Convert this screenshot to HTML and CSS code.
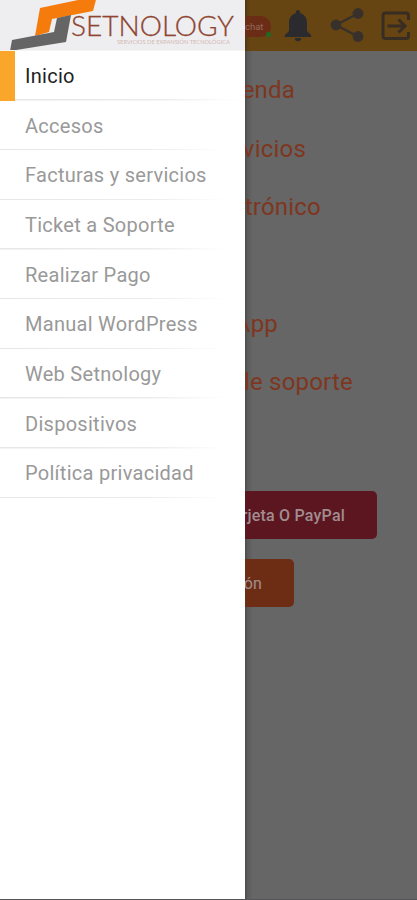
FILE: index.html
```html
<!DOCTYPE html>
<html lang="es">
<head>
    <meta charset="utf-8">
    <title>Setnology</title>
    <link rel="stylesheet" href="styles.css">
</head>
<body>
    <div class="app">
        <!-- Side menu -->
        <aside class="drawer">
            <div class="brand">
                <svg width="245" height="50" viewBox="0 0 245 50">
                    <path d="M40 8 L97 -4 L93 11 L52 19 L49 32 L35 36 Z" fill="#f57c0c"/>
                    <path d="M57 18 L71 15 L66 42 L10 51 L12 40 L54 32 Z" fill="#656565"/>
                    <text class="brand-name" x="71" y="36" textLength="163" lengthAdjust="spacingAndGlyphs">SETNOLOGY</text>
                    <text class="brand-tag" x="117" y="43.5" textLength="113" lengthAdjust="spacingAndGlyphs">SERVICIOS DE EXPANSIÓN TECNOLÓGICA</text>
                </svg>
            </div>
            <ul class="menu">
                <li class="menu-item active"><span>Inicio</span></li>
                <li class="menu-item"><span>Accesos</span></li>
                <li class="menu-item"><span>Facturas y servicios</span></li>
                <li class="menu-item"><span>Ticket a Soporte</span></li>
                <li class="menu-item"><span>Realizar Pago</span></li>
                <li class="menu-item"><span>Manual WordPress</span></li>
                <li class="menu-item"><span>Web Setnology</span></li>
                <li class="menu-item"><span>Dispositivos</span></li>
                <li class="menu-item"><span>Política privacidad</span></li>
            </ul>
        </aside>

        <!-- Dimmed page behind the menu -->
        <main class="page">
            <header class="topbar">
                <div class="chat">chat<span class="online"></span></div>
                <svg class="icon-bell" width="28" height="34" viewBox="0 0 28 34">
                    <path d="M14 1 C12.6 1 11.8 2 11.8 3.3 V4.2 C7.5 5.3 5 9 5 13.5 V22 L0.8 26.2 V28 H27.2 V26.2 L23 22 V13.5 C23 9 20.5 5.3 16.2 4.2 V3.3 C16.2 2 15.4 1 14 1 Z M10.8 29 A3.2 3.2 0 0 0 17.2 29 Z" fill="#2b2b2f"/>
                </svg>
                <svg class="icon-share" width="34" height="36" viewBox="0 0 34 36">
                    <path d="M28 5.5 L6 17 L28 28.5" fill="none" stroke="#38302a" stroke-width="2.4"/>
                    <circle cx="28" cy="5.5" r="5.4" fill="#38302a"/>
                    <circle cx="6" cy="17" r="5.4" fill="#38302a"/>
                    <circle cx="28" cy="28.5" r="5.4" fill="#38302a"/>
                </svg>
                <svg class="icon-exit" width="30" height="30" viewBox="0 0 30 30">
                    <path d="M27.5 9 V4.5 Q27.5 2 25 2 H4.5 Q2 2 2 4.5 V25 Q2 27.5 4.5 27.5 H25 Q27.5 27.5 27.5 25 V21" fill="none" stroke="#382d22" stroke-width="3"/>
                    <path d="M6.5 15 H24 M17.5 8.5 L24 15 L17.5 21.5" fill="none" stroke="#382d22" stroke-width="3"/>
                </svg>
            </header>
            <ul class="links">
                <li class="link-agenda">enda</li>
                <li class="link-services">vicios</li>
                <li class="link-mail">trónico</li>
                <li></li>
                <li class="link-app">App</li>
                <li class="link-support">de soporte</li>
            </ul>
            <div class="buttons">
                <div class="btn btn-pay">rjeta O PayPal</div>
                <div class="btn btn-session">ón</div>
            </div>
        </main>
    </div>
</body>
</html>
```
FILE: styles.css
```css
body {
    margin: 0;
    font-family: Roboto, "Liberation Sans", sans-serif;
    background-color: #666;
}

ul {
    list-style: none;
    margin: 0;
    padding: 0;
}

.app {
    display: flex;
    height: 900px;
    box-sizing: border-box;
    overflow: hidden;
    border-bottom: 1px solid #555559;
}

.drawer {
    flex: 0 0 245px;
    background-color: #fff;
}

.brand {
    height: 50px;
    background-color: #eeeef0;
    border-bottom: 1px solid #f5f5f5;
    overflow: hidden;
}

.brand svg {
    display: block;
}

.brand-name {
    font-family: Lato, sans-serif;
    font-size: 26.5px;
    font-weight: 300;
    fill: #8f4530;
    stroke: #8f4530;
    stroke-width: 0.3px;
}

.brand-tag {
    font-family: Lato, sans-serif;
    font-size: 5px;
    fill: #d3b8b3;
}

.menu-item {
    display: flex;
    align-items: center;
    height: 49.7px;
    padding-left: 25px;
    box-sizing: border-box;
    font-size: 20px;
    letter-spacing: 0.28px;
    color: #999;
    background: linear-gradient(to right, #e6e6e6 0, #ececec 150px, #fff 225px) bottom / 100% 1.5px no-repeat;
}

.menu-item.active {
    padding-left: 10px;
    border-left: 15px solid #f9a62b;
    color: #222;
}

.page {
    flex: 1;
    min-width: 0;
    overflow: hidden;
    background: linear-gradient(to right, #4c4c4c 0, #5c5c5c 3px, #666 8px);
}

.topbar {
    display: flex;
    align-items: center;
    height: 51px;
    background: linear-gradient(to right, #513811 0, #674512 5px);
}

.chat {
    display: flex;
    align-items: center;
    position: relative;
    width: 26px;
    height: 21px;
    margin-top: 1px;
    border-radius: 0 10px 10px 0;
    background-color: #6b2c16;
    color: #946a5c;
    font-size: 9.5px;
}

.online {
    position: absolute;
    right: 0;
    bottom: 0;
    width: 5px;
    height: 5px;
    border-radius: 50%;
    background-color: #1b6b25;
}

.icon-bell {
    margin-left: 13px;
}

.icon-share {
    margin-left: 18px;
}

.icon-exit {
    margin-left: 17px;
}

.links {
    padding-top: 10px;
}

/* long labels run out to the left, under the drawer */
.links li {
    display: flex;
    justify-content: flex-end;
    align-items: center;
    height: 58.4px;
    font-size: 24px;
    letter-spacing: 0.2px;
    white-space: nowrap;
    color: #7e3620;
}

.link-agenda {
    width: 50px;
}

.link-services {
    width: 61px;
}

.link-mail {
    width: 76px;
}

.link-app {
    width: 33px;
}

.link-support {
    width: 108px;
}

.buttons {
    display: flex;
    flex-direction: column;
    gap: 20px;
    padding-top: 80px;
}

.btn {
    display: flex;
    justify-content: flex-end;
    align-items: center;
    height: 48px;
    box-sizing: border-box;
    padding-right: 32px;
    border-radius: 0 5px 5px 0;
    font-size: 16px;
    letter-spacing: 0.2px;
    white-space: nowrap;
    color: #a18d90;
}

.btn-pay {
    width: 132px;
    background-color: #5b1620;
    font-weight: 500;
}

.btn-session {
    width: 49px;
    background-color: #6d2d15;
}
```
